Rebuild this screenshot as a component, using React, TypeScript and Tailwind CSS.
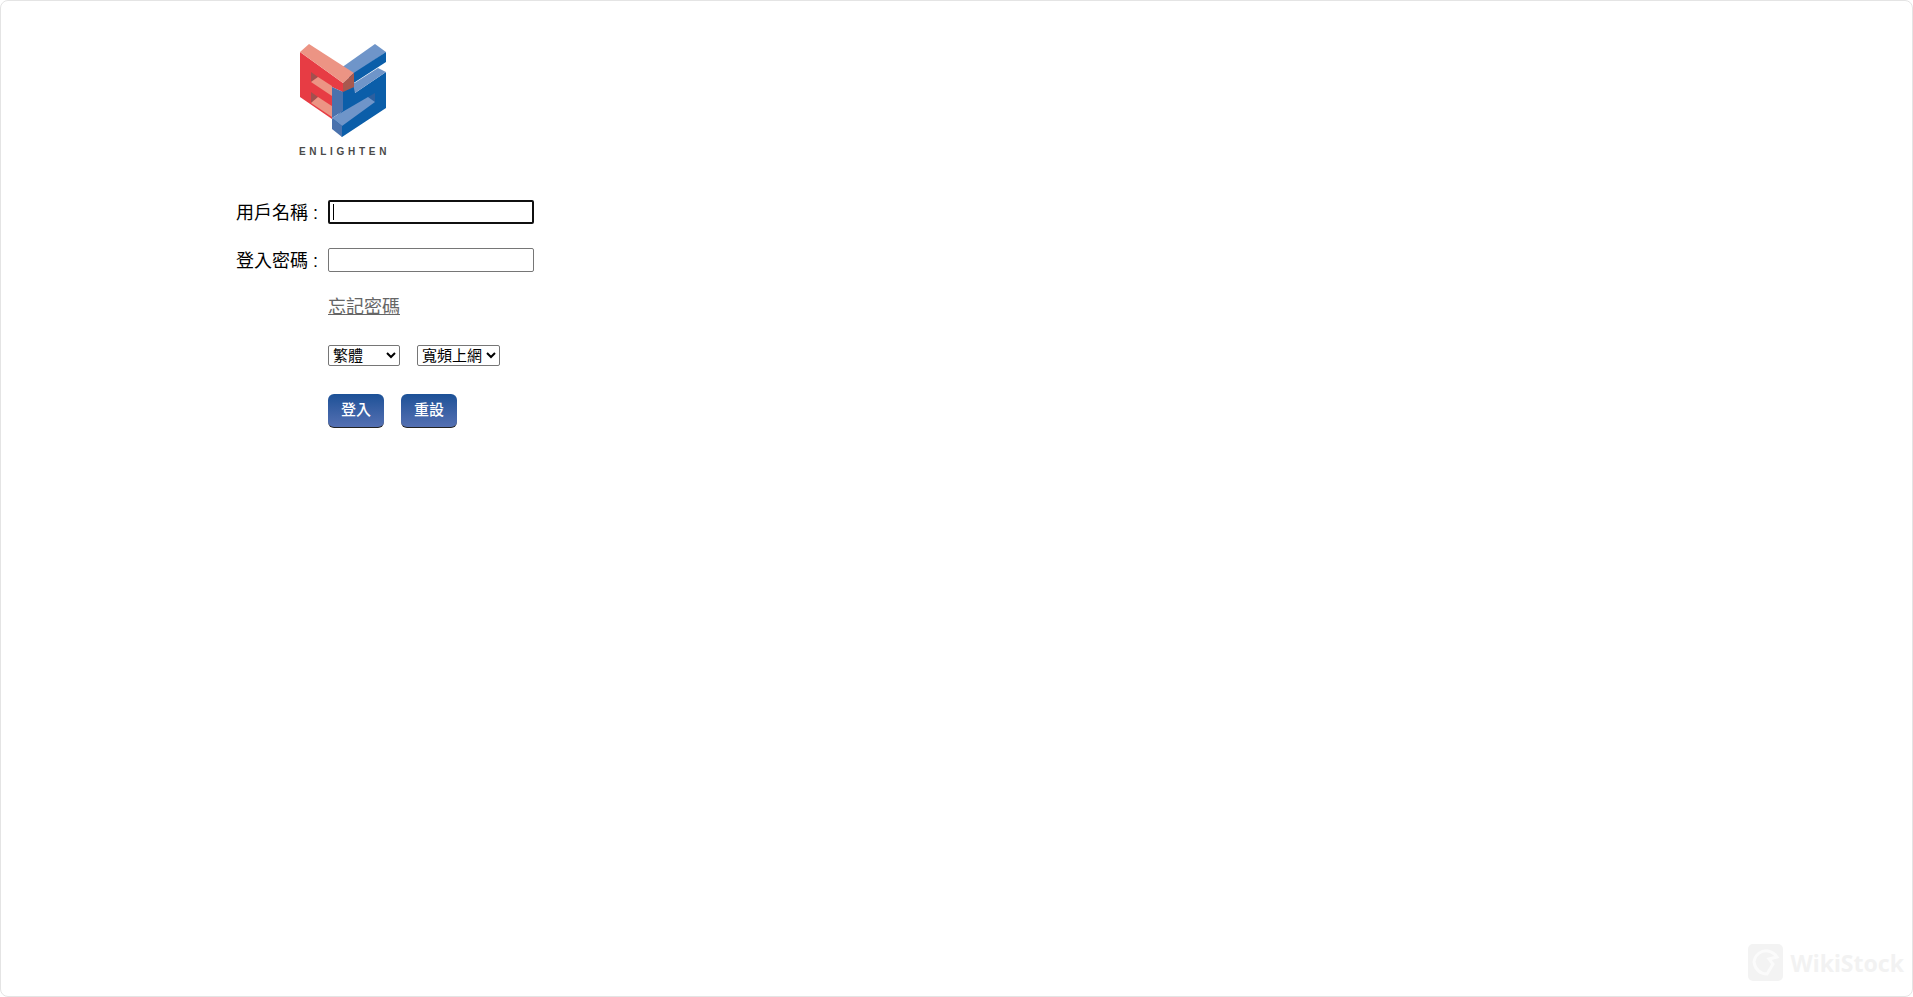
const FONT = "font-['Liberation_Sans','Noto_Sans_CJK_TC',sans-serif]"

function Logo() {
  return (
    <svg width="100" height="100" viewBox="0 0 100 100" className="block">
      {/* S, drawn first so the E's top bar sits over it */}
      <polygon fill="#6f95c9" points="46,28 80,4 91,12 56,36" />
      <polygon fill="#0b5ea9" points="54,36 91,12 91,22 54,46" />
      <polygon fill="#0b5ea9" points="46,52 60,43 60,53 91,32 91,68 47,97 37,80 46,72" />
      <polygon fill="#6f95c9" points="58,44 83,28 91,32 60,53" />
      <polygon fill="#2c5f9f" points="73,57 80,53 80,62" />
      <polygon fill="#6f95c9" points="37,78 73,57 80,62 47,86" />
      <polygon fill="#4a72ad" points="37,78 47,86 47,97 37,89" />
      {/* E */}
      <polygon fill="#e73c44" points="5,12 48,43 48,52 37,47 37,79 5,57" />
      <polygon fill="#a2504e" points="16,32 23,37 16,42" />
      <polygon fill="#ec9484" points="16,42 23,37 37,46 37,56" />
      <polygon fill="#a2504e" points="16,52 23,57 16,63" />
      <polygon fill="#ec9484" points="16,63 23,57 43,70 37,77" />
      <polygon fill="#4a72ad" points="37,47 48,52 48,71 37,78" />
      <polygon fill="#ec9484" points="5,12 14,4 59,33 48,43" />
      <polygon fill="#a8584e" points="48,43 59,33 59,47 48,52" />
    </svg>
  )
}

function Field({ label, focused }: { label: string; focused?: boolean }) {
  return (
    <div className="flex items-center h-[24px]">
      <label className="w-[92px] pt-[2px] text-[18px] leading-[24px] text-black whitespace-nowrap">{label}</label>
      <div className="relative">
        <input
          type="text"
          className={`block w-[206px] h-[24px] bg-white rounded-[2px] ${focused ? 'border-2 border-[#101010]' : 'border border-[#767676]'}`}
        />
        {focused && <span className="absolute left-[5px] top-[4px] w-px h-[16px] bg-black" />}
      </div>
    </div>
  )
}

function WatermarkIcon() {
  return (
    <svg width="35" height="37" viewBox="0 0 35 37" className="block">
      <rect width="35" height="37" rx="5" fill="#f3f3f3" />
      <path d="M6 18c1-8 8-12 14-11 4 1 7 3 9 6l-8 2 4 5-6 10c-7 0-12-5-13-12z" fill="none" stroke="#fbfbfb" strokeWidth="3" />
    </svg>
  )
}

export default function App() {
  return (
    <div className={`${FONT} relative h-[997px] w-full overflow-hidden bg-white rounded-[8px] border border-[#e4e4e4] pl-[235px]`}>
      <div className="pt-[39px] pl-[59px]">
        <Logo />
        <div className="mt-[6px] ml-[4px] text-[10px] leading-[12px] font-bold tracking-[3.7px] text-[#4a4a4a] whitespace-nowrap font-['Liberation_Sans_Narrow','Liberation_Sans',sans-serif]">
          ENLIGHTEN
        </div>
      </div>

      <form className="mt-[42px] flex flex-col">
        <Field label="用戶名稱 :" focused />
        <div className="mt-[24px]">
          <Field label="登入密碼 :" />
        </div>

        <div className="pl-[92px] flex flex-col items-start">
          <a className="mt-[23px] text-[18px] leading-[24px] text-[#666666] underline">忘記密碼</a>

          <div className="mt-[26px] flex gap-[17px]">
            <select className="w-[72px] h-[21px] text-[15px] leading-[19px] bg-white text-black border border-[#767676] rounded-[2px]">
              <option>繁體</option>
            </select>
            <select className="w-[83px] h-[21px] text-[15px] leading-[19px] bg-white text-black border border-[#767676] rounded-[2px]">
              <option>寬頻上網</option>
            </select>
          </div>

          <div className="mt-[28px] flex gap-[17px]">
            <button type="button" className="w-[56px] h-[34px] rounded-[6px] border-b border-[#222222] bg-linear-to-b from-[#1b5197] to-[#5470b2] text-[15px] font-medium text-white">登入</button>
            <button type="button" className="w-[56px] h-[34px] rounded-[6px] border-b border-[#222222] bg-linear-to-b from-[#1b5197] to-[#5470b2] text-[15px] font-medium text-white">重設</button>
          </div>
        </div>
      </form>

      <div className="absolute right-[8px] bottom-[15px] flex items-center gap-[8px]">
        <WatermarkIcon />
        <span className="text-[23px] leading-[30px] font-bold text-[#f2f2f2] font-['Noto_Sans',sans-serif]">WikiStock</span>
      </div>
    </div>
  )
}
